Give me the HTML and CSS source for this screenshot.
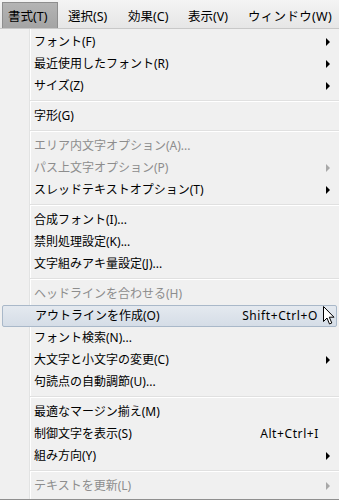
FILE: index.html
```html
<!DOCTYPE html>
<html lang="ja">
<head>
  <meta charset="UTF-8" />
  <title>書式メニュー</title>
  <link rel="stylesheet" href="styles.css">
</head>
<body>
  <div class="menubar">
    <span class="top open">書式(T)</span>
    <span class="top">選択(S)</span>
    <span class="top">効果(C)</span>
    <span class="top">表示(V)</span>
    <span class="top">ウィンドウ(W)</span>
  </div>

  <div class="menu">
    <div class="item sub">フォント(F)</div>
    <div class="item sub">最近使用したフォント(R)</div>
    <div class="item sub">サイズ(Z)</div>
    <div class="sep"></div>
    <div class="item">字形(G)</div>
    <div class="sep"></div>
    <div class="item off">エリア内文字オプション(A)...</div>
    <div class="item sub off">パス上文字オプション(P)</div>
    <div class="item sub">スレッドテキストオプション(T)</div>
    <div class="sep"></div>
    <div class="item">合成フォント(I)...</div>
    <div class="item">禁則処理設定(K)...</div>
    <div class="item">文字組みアキ量設定(J)...</div>
    <div class="sep"></div>
    <div class="item off">ヘッドラインを合わせる(H)</div>
    <div class="item hover">アウトラインを作成(O)<span class="key">Shift+Ctrl+O</span></div>
    <div class="item">フォント検索(N)...</div>
    <div class="item sub">大文字と小文字の変更(C)</div>
    <div class="item">句読点の自動調節(U)...</div>
    <div class="sep"></div>
    <div class="item">最適なマージン揃え(M)</div>
    <div class="item">制御文字を表示(S)<span class="key">Alt+Ctrl+I</span></div>
    <div class="item sub">組み方向(Y)</div>
    <div class="sep"></div>
    <div class="item sub off">テキストを更新(L)</div>

    <svg class="cursor" width="12" height="19" viewBox="0 0 12 19">
      <path d="M0.5 0.5 L0.5 15.5 L4 12 L6.5 18 L8.8 17 L6.3 11.2 L11 11.2 Z" fill="#fff" stroke="#000" stroke-width="1" stroke-linejoin="round"/>
    </svg>
  </div>
</body>
</html>
```

FILE: styles.css
```css
* {
  box-sizing: border-box;
}

body {
  margin: 0;
  width: 339px;
  height: 500px;
  background: #f0f0f0;
  font-family: "Noto Sans", "Noto Sans CJK JP", sans-serif;
  font-size: 12px;
  color: #000;
  overflow: hidden;
}

.menubar {
  height: 29px;
  display: flex;
  align-items: stretch;
  padding: 2px 0 0 2px;
  background: linear-gradient(#f4f4f4, #e6e6e6);
  border-bottom: 1px solid #c8c8c8;
}

.top {
  display: flex;
  align-items: center;
  flex-shrink: 0;
  width: 56px;
  margin-right: 4px;
  padding-left: 5px;
  border: 1px solid transparent;
  border-bottom: none;
  font-size: 12.5px;
  white-space: nowrap;
}

.top:last-child {
  width: auto;
  letter-spacing: 0.3px;
}

.top.open {
  background: linear-gradient(#b4b4b4, #a4a4a4);
  border-color: #8e8e8e;
}

.menu {
  position: relative;
  height: 471px;
  padding-top: 2px;
  background: linear-gradient(to right, #f0f0f0 29px, #e2e3e3 29px, #e2e3e3 30px, #ffffff 30px, #ffffff 31px, #f0f0f0 31px);
  border-bottom: 1px solid #8f8f8f;
}

.item {
  position: relative;
  height: 22px;
  line-height: 22px;
  padding-left: 34px;
  white-space: nowrap;
}

.item.off {
  color: #8d8d8d;
}

.sub::after {
  content: "";
  position: absolute;
  right: 9px;
  top: 7px;
  border-left: 4px solid #000;
  border-top: 4px solid transparent;
  border-bottom: 4px solid transparent;
}

.sub.off::after {
  border-left-color: #a8a8a8;
}

.key {
  position: absolute;
  right: 20px;
  top: 0;
  letter-spacing: 0.6px;
}

.hover {
  margin: 0 2px;
  padding-left: 32px;
  background: linear-gradient(#e4e9ef, #d5dde7);
  border: 1px solid #a9b8c9;
  border-radius: 2px;
  line-height: 20px;
}

.hover .key {
  right: 18px;
}

.sep {
  height: 8px;
  margin-left: 30px;
  background: linear-gradient(transparent 3px, #e0e0e0 3px, #e0e0e0 4px, #ffffff 4px, #ffffff 5px, transparent 5px);
}

.cursor {
  position: absolute;
  left: 323px;
  top: 277px;
}
```
